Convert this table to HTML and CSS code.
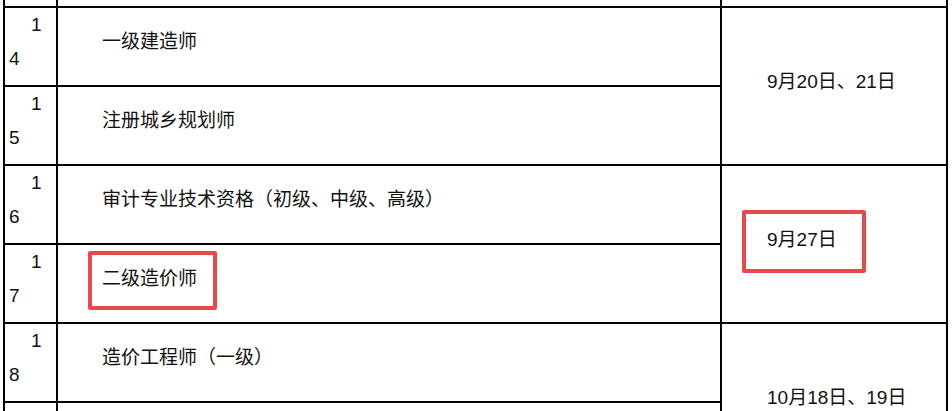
FILE: index.html
```html
<!DOCTYPE html>
<html lang="zh-CN">
<head>
<meta charset="utf-8">
<title>考试时间表</title>
<link rel="stylesheet" href="styles.css">
</head>
<body>
<div class="viewport">
  <table class="schedule">
    <tr class="tail">
      <td class="c-no"></td>
      <td class="c-name"></td>
      <td class="c-date"></td>
    </tr>
    <tr>
      <td class="c-no">14</td>
      <td class="c-name">一级建造师</td>
      <td class="c-date" rowspan="2">9月20日、21日</td>
    </tr>
    <tr>
      <td class="c-no">15</td>
      <td class="c-name">注册城乡规划师</td>
    </tr>
    <tr>
      <td class="c-no">16</td>
      <td class="c-name">审计专业技术资格（初级、中级、高级）</td>
      <td class="c-date" rowspan="2">9月27日</td>
    </tr>
    <tr>
      <td class="c-no">17</td>
      <td class="c-name">二级造价师</td>
    </tr>
    <tr>
      <td class="c-no">18</td>
      <td class="c-name">造价工程师（一级）</td>
      <td class="c-date" rowspan="2">10月18日、19日</td>
    </tr>
    <tr>
      <td class="c-no"></td>
      <td class="c-name"></td>
    </tr>
  </table>
  <div class="mark mark-name"></div>
  <div class="mark mark-date"></div>
</div>
</body>
</html>
```
FILE: styles.css
```css
html, body {
  margin: 0;
  padding: 0;
  background: #fff;
}

.viewport {
  position: relative;
  width: 952px;
  height: 411px;
  overflow: hidden;
  font-family: "Liberation Sans", "Noto Sans CJK SC", sans-serif;
  font-size: 19px;
  line-height: 34px;
  color: #111;
}

.schedule {
  margin-left: 3px;
  border-collapse: separate;
  border-spacing: 0;
  table-layout: fixed;
  width: 945px;
  border-left: 2px solid #000;
}

.schedule td {
  box-sizing: border-box;
  height: 79px;
  border-right: 2px solid #000;
  border-bottom: 2px solid #000;
  vertical-align: middle;
  padding: 0 0 9px 0;
}

.schedule .tail td {
  height: 8px;
  padding: 0;
}

.c-no {
  width: 53px;
  padding: 0 6px 9px 4px !important;
  text-indent: 22px;
  word-break: break-all;
}

.tail .c-no {
  padding: 0 !important;
}

.c-name {
  width: 664px;
  padding-left: 44px !important;
}

.c-date {
  width: 226px;
  padding-left: 45px !important;
}

.mark {
  position: absolute;
  box-sizing: border-box;
  border: 4px solid #e8494d;
  border-radius: 2px;
}

.mark-name {
  left: 88px;
  top: 251px;
  width: 129px;
  height: 59px;
}

.mark-date {
  left: 742px;
  top: 210px;
  width: 124px;
  height: 63px;
}
```
